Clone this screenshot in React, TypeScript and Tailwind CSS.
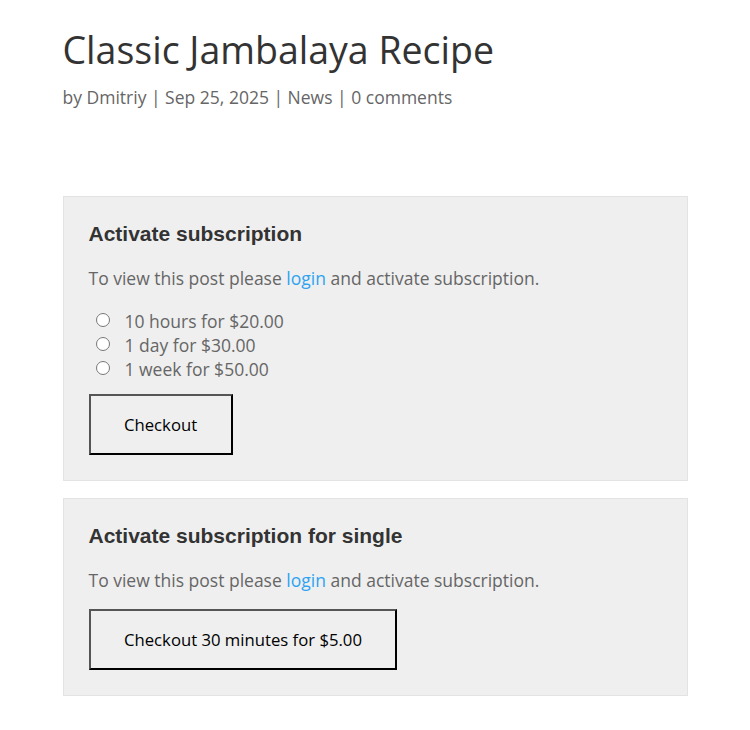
const body = "font-['Open_Sans',sans-serif]";

function Box({ title, children }: { title: string; children: React.ReactNode }) {
  return (
    <section className="border border-[#e3e3e3] bg-[#efefef] px-[25px] pt-[25px] pb-[25px]">
      <h2 className="font-['Liberation_Sans',Arial,sans-serif] text-[21px] font-bold leading-[24px] text-[#333]">
        {title}
      </h2>
      <p className={`${body} mt-[20px] text-[17.5px] leading-[24px] text-[#666]`}>
        To view this post please{" "}
        <a href="#" className="text-[#2ea3f2]">
          login
        </a>{" "}
        and activate subscription.
      </p>
      {children}
    </section>
  );
}

function CheckoutButton({ label }: { label: string }) {
  return (
    <button
      type="button"
      className={`${body} h-[61px] border-2 border-t-[#555] border-l-[#555] border-b-black border-r-black bg-[#efefef] px-[33.5px] text-[16.7px] text-black`}
    >
      {label}
    </button>
  );
}

export default function App() {
  const plans = ["10 hours for $20.00", "1 day for $30.00", "1 week for $50.00"];
  return (
    <div className="min-h-[730px] bg-white">
      <div className="mx-auto w-[625px] pt-[26px]">
        <h1 className={`${body} text-[37.5px] leading-[48px] text-[#333]`}>Classic Jambalaya Recipe</h1>
        <p className={`${body} mt-[11px] text-[17.5px] leading-[24px] text-[#666]`}>
          by Dmitriy | Sep 25, 2025 | News | 0 comments
        </p>

        <div className="mt-[87px] flex flex-col gap-[17px]">
          <Box title="Activate subscription">
            <ul className={`${body} mt-[19px] text-[17.5px] leading-[24px] text-[#666]`}>
              {plans.map((p) => (
                <li key={p} className="flex items-center">
                  <input type="radio" name="plan" className="ml-[7px] mr-[15px] mb-[3px] h-[14px] w-[14px]" />
                  <span>{p}</span>
                </li>
              ))}
            </ul>
            <div className="mt-[13px] flex">
              <CheckoutButton label="Checkout" />
            </div>
          </Box>
          <Box title="Activate subscription for single">
            <div className="mt-[17px] flex">
              <CheckoutButton label="Checkout 30 minutes for $5.00" />
            </div>
          </Box>
        </div>
      </div>
    </div>
  );
}
